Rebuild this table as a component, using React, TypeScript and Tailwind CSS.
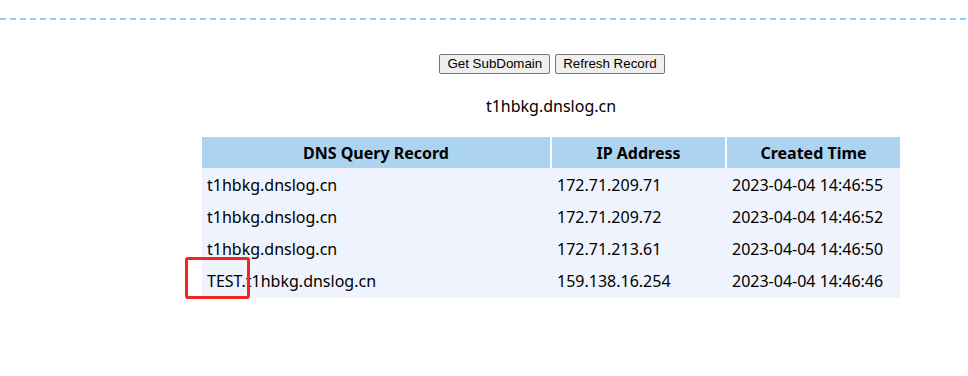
import React from 'react';

// DNS 記録データ
const RECORDS = [
  { domain: 't1hbkg.dnslog.cn', ip: '172.71.209.71', time: '2023-04-04 14:46:55' },
  { domain: 't1hbkg.dnslog.cn', ip: '172.71.209.72', time: '2023-04-04 14:46:52' },
  { domain: 't1hbkg.dnslog.cn', ip: '172.71.213.61', time: '2023-04-04 14:46:50' },
  { domain: 'TEST.t1hbkg.dnslog.cn', ip: '159.138.16.254', time: '2023-04-04 14:46:46' },
];

const FONT = "font-['Segoe_UI','Noto_Sans','Noto_Sans_CJK_SC',sans-serif]";

const Btn: React.FC<{ label: string }> = ({ label }) => (
  <button className="h-[20px] px-[7px] text-[13.33px] leading-none text-black bg-[#efefef] border border-[#767676] rounded-[2px] font-['Liberation_Sans',Arial,sans-serif]">
    {label}
  </button>
);

export default function App() {
  return (
    <div className={`relative w-[968px] h-[376px] bg-white overflow-hidden text-black ${FONT}`}>
      {/* 上部の破線 */}
      <div className="mt-[18px] h-[2px] w-full bg-[repeating-linear-gradient(90deg,#8fcdf3_0_6px,transparent_6px_10px)]" />

      <div className="ml-[202px] w-[698px] flex flex-col">
        {/* ボタン */}
        <div className="mt-[34px] flex justify-center gap-[5px] pl-[2px]">
          <Btn label="Get SubDomain" />
          <Btn label="Refresh Record" />
        </div>

        <div className="mt-[21px] text-center text-[16px] leading-[22px]">t1hbkg.dnslog.cn</div>

        {/* テーブル */}
        <div className="mt-[20px] flex flex-col">
          <div className="flex h-[31px] gap-[2px] font-bold text-[16px]">
            <div className="w-[348px] bg-[#acd3ef] flex items-center justify-center">DNS Query Record</div>
            <div className="w-[173px] bg-[#acd3ef] flex items-center justify-center">IP Address</div>
            <div className="flex-1 bg-[#acd3ef] flex items-center justify-center">Created Time</div>
          </div>
          <div className="bg-[#eef3fd] flex flex-col pt-[1px] pb-[1px]">
            {RECORDS.map((r, i) => (
              <div key={i} className="flex h-[32px] items-center text-[16px] gap-[2px]">
                <div className="w-[348px] pl-[5px]">{r.domain}</div>
                <div className="w-[173px] pl-[5px]">{r.ip}</div>
                <div className="flex-1 pl-[5px]">{r.time}</div>
              </div>
            ))}
          </div>
        </div>
      </div>

      {/* 注釈の赤枠 */}
      <div className="absolute left-[185px] top-[257px] w-[65px] h-[42px] border-[3px] border-[#f5251d] rounded-[3px]" />
    </div>
  );
}
